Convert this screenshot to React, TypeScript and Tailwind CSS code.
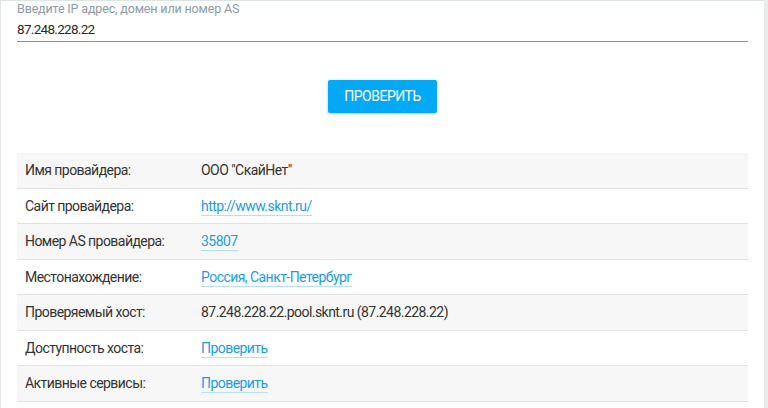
import React from 'react';

type Row = { label: string; value: string; link?: boolean };

const rows: Row[] = [
  { label: 'Имя провайдера:', value: 'ООО "СкайНет"' },
  { label: 'Сайт провайдера:', value: 'http://www.sknt.ru/', link: true },
  { label: 'Номер AS провайдера:', value: '35807', link: true },
  { label: 'Местонахождение:', value: 'Россия, Санкт-Петербург', link: true },
  { label: 'Проверяемый хост:', value: '87.248.228.22.pool.sknt.ru (87.248.228.22)' },
  { label: 'Доступность хоста:', value: 'Проверить', link: true },
  { label: 'Активные сервисы:', value: 'Проверить', link: true },
];

export default function App() {
  return (
    <div className="flex w-[768px] h-[408px] overflow-hidden bg-white font-['Roboto',sans-serif]">
      <div className="flex-1 min-w-0 border-l border-t border-l-[#e6e6e6] border-t-[#dde5e4] px-4">
        {/* Input field */}
        <div className="pt-[1px]">
          <div className="text-[12.5px] leading-[14px] tracking-[-0.15px] text-[#8d9ba6]">Введите IP адрес, домен или номер AS</div>
          <div className="mt-[6px] text-[13.5px] leading-[14px] tracking-[-0.7px] text-[#2b2b2b] pb-[5px] border-b border-[#8e9297]">
            87.248.228.22
          </div>
        </div>

        {/* Check button */}
        <div className="flex justify-center mt-[38px]">
          <button className="w-[109px] h-[33px] bg-[#03a9f4] text-white text-[14px] tracking-[-0.5px] uppercase rounded-[2px] shadow-[0_1px_3px_rgba(0,0,0,0.25)]">
            Проверить
          </button>
        </div>

        {/* Provider info */}
        <div className="mt-[40px] text-[14px] tracking-[-0.55px] text-[#333]">
          {rows.map((r, i) => (
            <div
              key={r.label}
              className={`flex items-center h-[35.5px] pt-[1px] border-b border-[#e2e2e2] ${i % 2 === 0 ? 'bg-[#f7f7f7]' : 'bg-white'}`}
            >
              <div className="w-[184px] pl-2 shrink-0">{r.label}</div>
              <div>
                {r.link ? (
                  <a href="#" className="text-[#1a9cec] border-b border-[#b3e1fb] pb-[1px]">{r.value}</a>
                ) : (
                  r.value
                )}
              </div>
            </div>
          ))}
        </div>
      </div>
      <div className="w-[4px] bg-[#ebebeb]" />
    </div>
  );
}
